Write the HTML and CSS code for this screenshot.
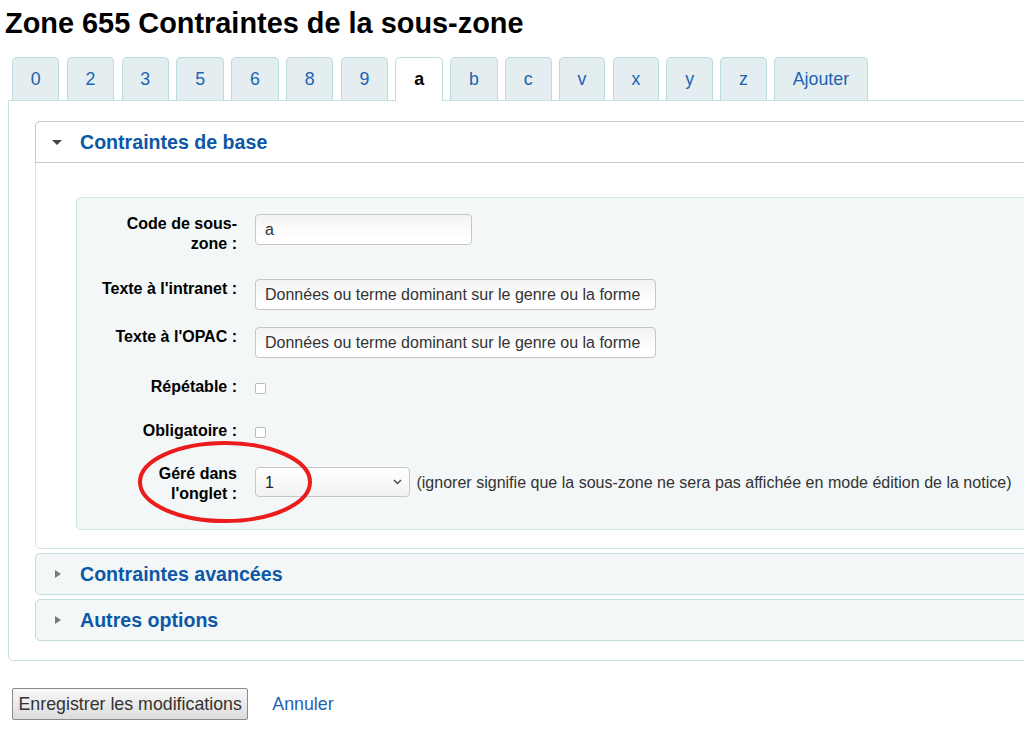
FILE: index.html
```html
<!DOCTYPE html>
<html lang="fr">
<head>
<meta charset="utf-8">
<title>Zone 655 Contraintes de la sous-zone</title>
<link rel="stylesheet" href="styles.css">
</head>
<body>
<h1 class="title">Zone 655 Contraintes de la sous-zone</h1>
<ul class="tabs">
  <li class="tab">0</li>
  <li class="tab">2</li>
  <li class="tab">3</li>
  <li class="tab">5</li>
  <li class="tab">6</li>
  <li class="tab">8</li>
  <li class="tab">9</li>
  <li class="tab active">a</li>
  <li class="tab">b</li>
  <li class="tab">c</li>
  <li class="tab">v</li>
  <li class="tab">x</li>
  <li class="tab">y</li>
  <li class="tab">z</li>
  <li class="tab">Ajouter</li>
</ul>
<div class="panel">
  <div class="section open">
    <div class="sec-head"><span class="tri-down"></span><h3>Contraintes de base</h3></div>
    <div class="sec-body">
      <fieldset class="rows">
        <div class="row r1">
          <label>Code de sous-zone&nbsp;:</label>
          <input class="text short" type="text" value="a">
        </div>
        <div class="row r2">
          <label>Texte à l'intranet&nbsp;:</label>
          <input class="text long" type="text" value="Données ou terme dominant sur le genre ou la forme">
        </div>
        <div class="row r3">
          <label>Texte à l'OPAC&nbsp;:</label>
          <input class="text long" type="text" value="Données ou terme dominant sur le genre ou la forme">
        </div>
        <div class="row r4">
          <label>Répétable&nbsp;:</label>
          <input class="check" type="checkbox">
        </div>
        <div class="row r5">
          <label>Obligatoire&nbsp;:</label>
          <input class="check" type="checkbox">
        </div>
        <div class="row r6">
          <label>Géré dans l'onglet&nbsp;:</label>
          <div class="control">
            <span class="select-wrap"><select class="select"><option>1</option></select><svg class="chev" width="9" height="6" viewBox="0 0 9 6"><path d="M1 1 L4.5 4.5 L8 1" fill="none" stroke="#444" stroke-width="1.4"/></svg></span>
            <span class="hint">(ignorer signifie que la sous-zone ne sera pas affichée en mode édition de la notice)</span>
          </div>
        </div>
      </fieldset>
    </div>
  </div>
  <div class="section closed">
    <div class="sec-head"><span class="tri-right"></span><h3>Contraintes avancées</h3></div>
  </div>
  <div class="section closed">
    <div class="sec-head"><span class="tri-right"></span><h3>Autres options</h3></div>
  </div>
</div>
<div class="actions">
  <button class="btn" type="button">Enregistrer les modifications</button>
  <a class="cancel" href="#">Annuler</a>
</div>
<svg class="annot" width="180" height="86" viewBox="0 0 180 86"><ellipse cx="89" cy="42" rx="85" ry="39" fill="none" stroke="#ea1c1c" stroke-width="4"/></svg>
</body>
</html>
```
FILE: styles.css
```css
html, body {
  margin: 0;
  overflow: hidden;
  background: #fff;
}
body {
  position: relative;
  padding-left: 5px;
  font-family: "Liberation Sans", Arial, sans-serif;
  color: #000;
}
.title {
  margin: 0;
  padding-top: 6px;
  font-size: 28.9px;
  line-height: 34px;
  font-weight: bold;
}
.tabs {
  display: flex;
  list-style: none;
  margin: 17px 0 0 7px;
  padding: 0;
}
.tab {
  margin-right: 7.3px;
  border: 1px solid #bcdadc;
  border-bottom: 0;
  border-radius: 5px 5px 0 0;
  background: #e4eef0;
  padding: 11px 17.8px;
  font-size: 17.8px;
  line-height: 20px;
  color: #2063b0;
}
.tab.active {
  position: relative;
  z-index: 1;
  background: #fff;
  color: #000;
  font-weight: bold;
  padding-bottom: 12px;
  margin-bottom: -1px;
}
.panel {
  margin-left: 3px;
  width: 1100px;
  border: 1px solid #c8e0e2;
  border-radius: 0 0 0 5px;
  padding: 20px 0 19px 26px;
}
.section {
  border: 1px solid #c3dcde;
  border-radius: 5px;
}
.sec-head {
  display: flex;
  align-items: center;
  padding: 8px 0 8px 16px;
}
.sec-head h3 {
  margin: 0;
  font-size: 19.6px;
  line-height: 24px;
  font-weight: bold;
  color: #0c57a6;
}
.open {
  border-color: #d2e5e7;
}
.open .sec-head {
  margin: -1px -1px 0 -1px;
  border: 1px solid #c9c9c9;
  border-radius: 5px 5px 0 0;
  background: #fff;
}
.closed {
  margin-top: 4px;
  background: #f3f7f8;
}
.tri-down {
  width: 0;
  height: 0;
  border-left: 5px solid transparent;
  border-right: 5px solid transparent;
  border-top: 5px solid #444;
  margin-right: 18px;
}
.tri-right {
  width: 0;
  height: 0;
  border-top: 4.5px solid transparent;
  border-bottom: 4.5px solid transparent;
  border-left: 6px solid #7a7a7a;
  margin-left: 3px;
  margin-right: 19px;
}
.sec-body {
  padding: 34px 0 18px 40px;
}
.rows {
  margin: 0;
  border: 1px solid #d3e4e6;
  border-radius: 5px;
  background: #f3f7f8;
  padding: 16px 0 25px 21px;
}
.row {
  display: flex;
  align-items: flex-start;
}
.row label {
  flex: none;
  width: 139px;
  margin-right: 18px;
  text-align: right;
  font-weight: bold;
  font-size: 16px;
  line-height: 20px;
}
.r1 { margin-bottom: 25px; }
.r2 { margin-bottom: 17px; }
.r3 { margin-bottom: 19px; }
.r4 { margin-bottom: 24px; }
.r5 { margin-bottom: 23px; }
.text {
  box-sizing: border-box;
  height: 31px;
  margin: 0;
  padding: 0 9px;
  border: 1px solid #c6c6c6;
  border-radius: 4px;
  background: linear-gradient(to bottom, #f3f3f3, #fff 75%);
  font-family: "Liberation Sans", Arial, sans-serif;
  font-size: 16px;
  color: #333;
}
.short { width: 217px; }
.long { width: 401px; }
.check {
  -webkit-appearance: none;
  appearance: none;
  box-sizing: border-box;
  width: 11px;
  height: 11px;
  margin: 6px 0 0 0;
  border: 1px solid #bbb;
  border-radius: 2px;
  background: #fff;
}
.control {
  margin-top: 3px;
  white-space: nowrap;
}
.select-wrap {
  position: relative;
  display: inline-block;
}
.select {
  -webkit-appearance: none;
  appearance: none;
  box-sizing: border-box;
  width: 155px;
  height: 30px;
  margin: 0;
  padding: 0 9px;
  border: 1px solid #c6c6c6;
  border-radius: 4px;
  background: linear-gradient(to bottom, #fff, #f2f2f2);
  font-family: "Liberation Sans", Arial, sans-serif;
  font-size: 16px;
  color: #222;
}
.chev {
  position: absolute;
  right: 8px;
  top: 12px;
}
.hint {
  margin-left: 2px;
  font-size: 16.05px;
  color: #333;
}
.actions {
  display: flex;
  align-items: baseline;
  margin: 27px 0 0 7px;
}
.btn {
  font-family: "Liberation Sans", Arial, sans-serif;
  font-size: 17.8px;
  line-height: 20px;
  padding: 5px 5.5px;
  border: 1px solid #8a8a8a;
  border-radius: 2px;
  background: linear-gradient(to bottom, #f8f8f8, #dcdcdc);
  color: #333;
}
.cancel {
  margin-left: 24px;
  font-size: 17.8px;
  color: #1f62b0;
  text-decoration: none;
}
.annot {
  position: absolute;
  left: 136px;
  top: 440px;
}
```
